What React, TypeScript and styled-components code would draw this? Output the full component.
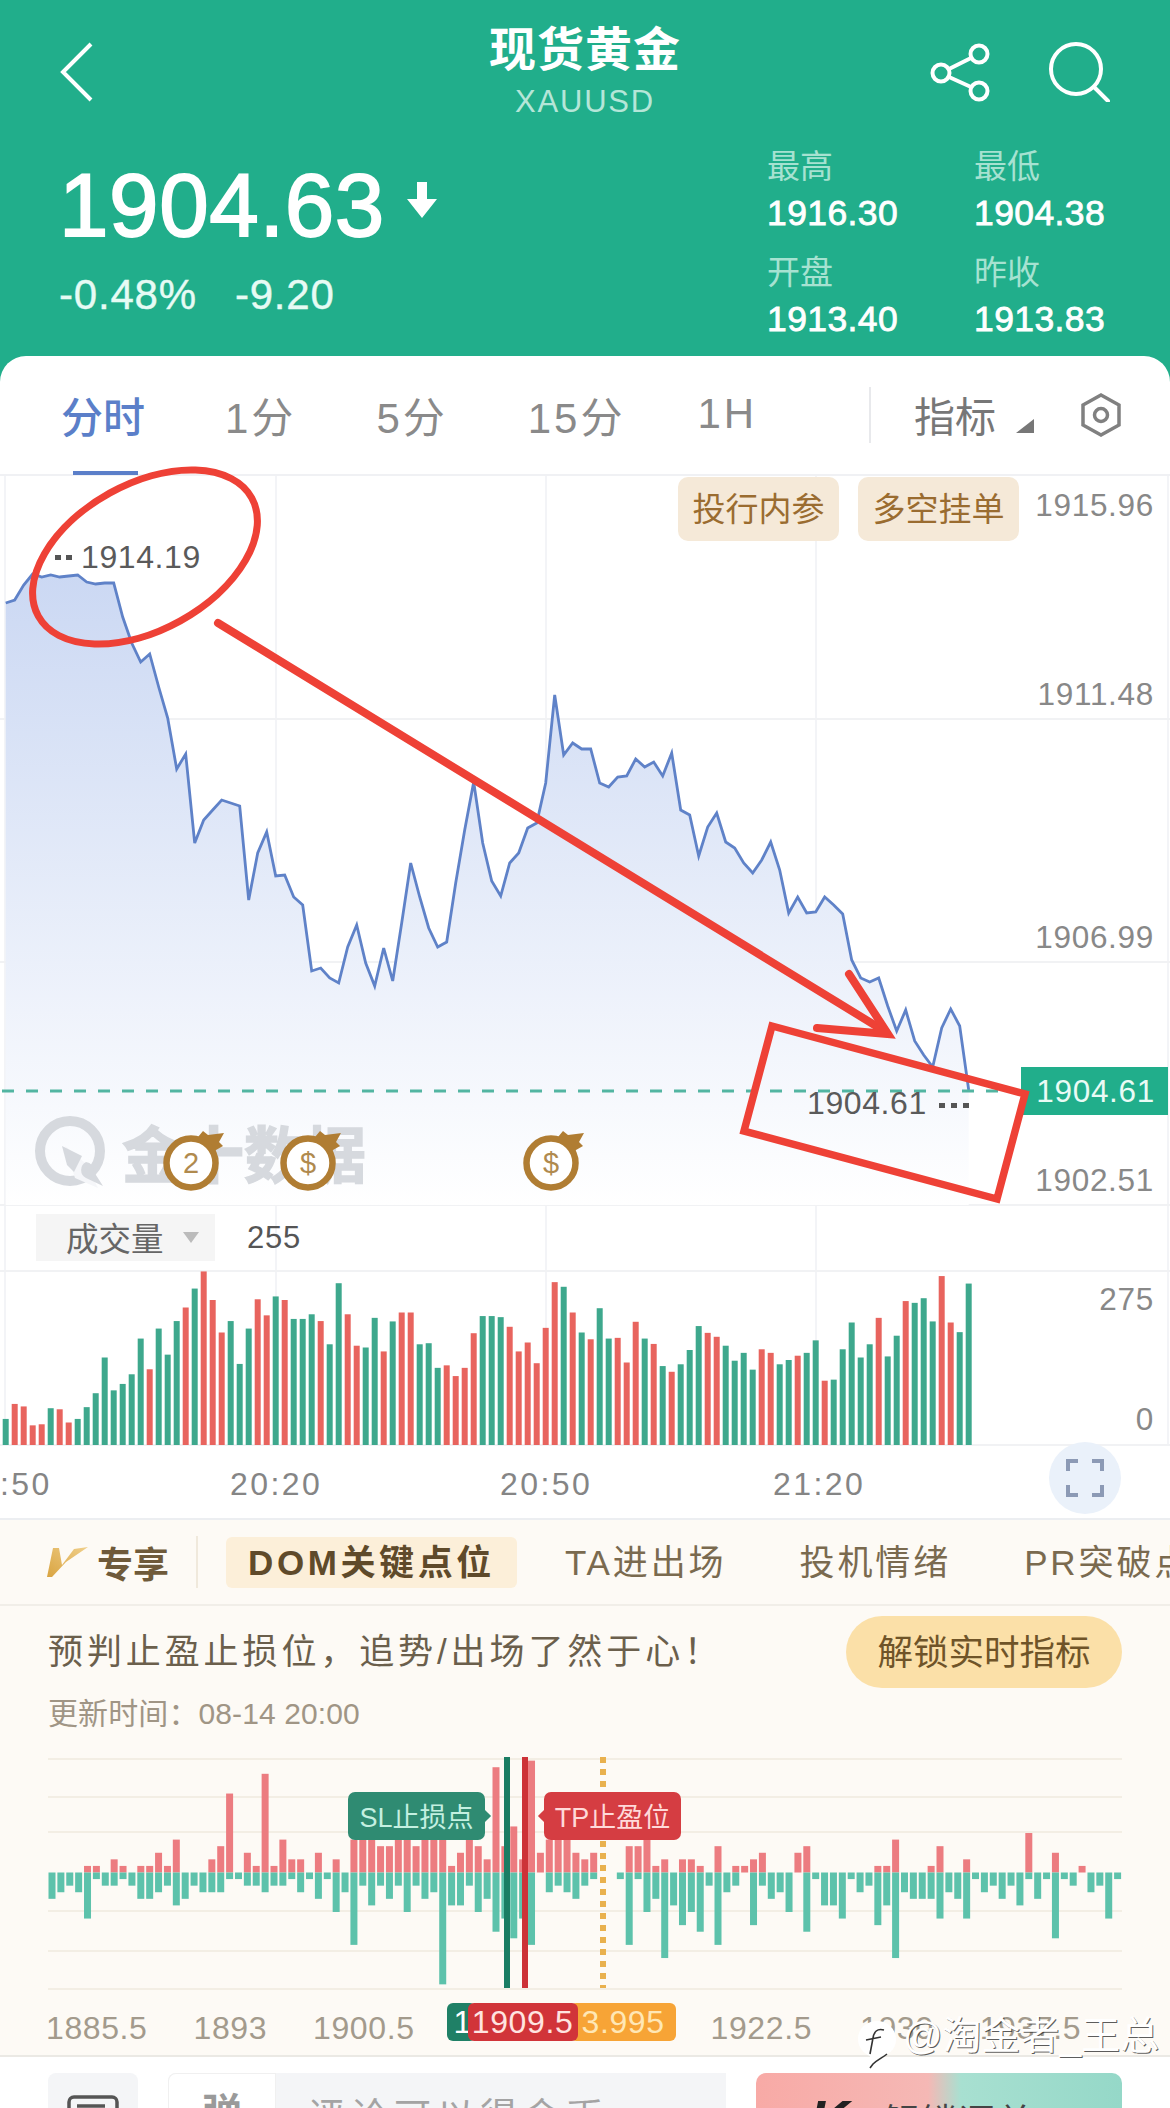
import React from 'react';
import styled, { createGlobalStyle } from 'styled-components';

const GlobalStyle = createGlobalStyle`
  html, body {
    margin: 0;
    padding: 0;
    background: #fff;
    font-family: "Liberation Sans", "Noto Sans CJK SC", sans-serif;
  }
`;

// chart data, read off the picture in page pixels
const priceLine = [
  603, 600, 585, 574, 577, 575, 577, 576, 575, 582, 584, 583, 583, 617, 643, 662, 654, 687, 718, 769,
  754, 843, 820, 810, 800, 803, 806, 900, 853, 832, 876, 875, 897, 905, 971, 968, 978, 983, 947, 925,
  963, 986, 948, 981, 923, 863, 897, 928, 947, 942, 883, 830, 782, 843, 881, 896, 863, 853, 828, 823,
  783, 695, 755, 743, 749, 749, 783, 787, 777, 776, 759, 767, 762, 776, 753, 810, 815, 856, 827, 813,
  842, 848, 863, 873, 860, 842, 870, 913, 897, 913, 912, 897, 905, 914, 960, 978, 982, 978, 1006, 1031,
  1010, 1041, 1055, 1067, 1028, 1009, 1026, 1090,
];

// volume bar tops as read from the crop, g = green, r = red
const volumeBars =
  'g1285 r1243 r1250 r1303 r1300 g1255 r1258 r1295 g1285 g1252 g1213 g1113 g1205 g1187 g1160 g1060 r1146 g1032 g1105 g1011 ' +
  'r973 g920 r872 r952 r1043 g1011 g1131 g1032 r950 r995 g942 r952 g1005 g1005 g992 r1011 g1076 g905 r992 r1080 ' +
  'g1085 g1002 r1096 g1012 r987 r987 g1076 g1073 g1142 r1135 r1165 r1142 r1045 g997 g997 g1000 r1027 r1096 r1071 r1129 ' +
  'r1030 r902 g915 r987 g1043 r1062 g975 g1060 r1058 r1127 r1013 g1060 r1075 g1137 r1153 g1132 g1092 g1025 r1044 r1055 ' +
  'g1080 g1122 g1100 g1147 r1090 r1100 g1132 g1120 r1108 g1100 g1065 r1178 g1175 g1090 g1015 g1113 g1076 r1002 g1110 g1052 ' +
  'r955 g960 g947 g1012 r885 r1015 g1042 g906';

const domRed = [
  0, 0, 0, 0, 1, 1, 0, 2, 1, 0, 1, 1, 3, 1, 5, 0, 0, 0, 2, 4, 12, 0, 3, 1, 15, 1, 5, 2, 2, 0, 3, 0, 2, 0, 5, 5, 5, 4, 4, 5,
  5, 4, 5, 5, 5, 1, 3, 5, 4, 2, 16, 4, 7, 2, 17, 3, 5, 5, 5, 3, 2, 3, 0, 0, 0, 4, 4, 6, 1, 2, 0, 2, 2, 1, 0, 4, 0, 1, 1, 2,
  3, 0, 0, 0, 3, 4, 0, 0, 0, 0, 0, 0, 0, 1, 1, 5, 0, 0, 0, 1, 4, 0, 0, 2, 0, 0, 0, 0, 0, 0, 6, 0, 0, 3, 0, 0, 1, 0, 0, 0, 0,
];
const domGreen = [
  4, 3, 2, 3, 7, 1, 2, 2, 1, 2, 4, 4, 3, 2, 5, 4, 2, 3, 3, 3, 1, 1, 2, 2, 3, 2, 2, 1, 3, 1, 4, 1, 6, 3, 11, 2, 5, 2, 4, 2,
  6, 2, 4, 3, 17, 5, 5, 2, 6, 4, 9, 7, 10, 7, 11, 0, 3, 2, 3, 4, 2, 1, 0, 0, 1, 11, 1, 6, 4, 13, 5, 8, 6, 9, 2, 11, 3, 2, 0, 8,
  2, 4, 3, 6, 0, 9, 1, 5, 5, 7, 1, 3, 2, 8, 5, 13, 3, 4, 4, 4, 7, 3, 4, 7, 1, 3, 2, 4, 2, 5, 1, 4, 1, 10, 1, 2, 0, 3, 2, 7, 1,
];

const Page = styled.div`
  position: relative;
  width: 1170px;
  height: 2108px;
  overflow: hidden;
  display: flex;
  flex-direction: column;
  background: #fff;
`;

const Header = styled.header`
  height: 384px;
  flex-shrink: 0;
  background: #21ae8b;
  color: #fff;
`;

const TopBar = styled.div`
  display: grid;
  grid-template-columns: 1fr auto 1fr;
  height: 125px;
  padding: 0 60px;
  box-sizing: border-box;
`;

const BackIcon = styled.svg`
  width: 34px;
  height: 60px;
  margin-top: 42px;
`;

const TitleBlock = styled.div`
  display: flex;
  flex-direction: column;
  align-items: center;
  padding-top: 22px;
`;

const Title = styled.div`
  font-size: 47px;
  line-height: 56px;
  font-weight: 700;
  letter-spacing: 1px;
`;

const Symbol = styled.div`
  margin-top: 4px;
  font-size: 31px;
  line-height: 40px;
  letter-spacing: 1.8px;
  color: #b5e6d8;
`;

const TopIcons = styled.div`
  display: flex;
  justify-content: flex-end;
  gap: 58px;
  padding-top: 42px;
`;

const QuoteRow = styled.div`
  display: flex;
  justify-content: space-between;
  padding: 0 66px 0 59px;
`;

const PriceBlock = styled.div`
  padding-top: 35px;
`;

const PriceLine = styled.div`
  display: flex;
  align-items: flex-start;
`;

const Price = styled.div`
  font-size: 89px;
  line-height: 90px;
  letter-spacing: 0.6px;
  -webkit-text-stroke: 1.8px #fff;
`;

const DownArrow = styled.svg`
  width: 30px;
  height: 36px;
  margin: 22px 0 0 22px;
`;

const ChangeLine = styled.div`
  display: flex;
  gap: 38px;
  margin-top: 20px;
  font-size: 42px;
  line-height: 50px;
  letter-spacing: 0.8px;
  color: #e6fbf4;
  -webkit-text-stroke: 0.4px #e6fbf4;
`;

const StatsGrid = styled.div`
  display: grid;
  grid-template-columns: 207px 130px;
  row-gap: 20px;
  padding-top: 22px;
  align-self: flex-start;
`;

const Stat = styled.div`
  display: flex;
  flex-direction: column;
  gap: 6px;
`;

const StatLabel = styled.div`
  font-size: 33px;
  line-height: 40px;
  color: #a6e2d1;
`;

const StatValue = styled.div`
  font-size: 35.5px;
  line-height: 40px;
  letter-spacing: 0.4px;
  -webkit-text-stroke: 0.8px #fff;
`;

const ChartPanel = styled.section`
  position: relative;
  margin-top: -28px;
  height: 1164px;
  flex-shrink: 0;
  background: #fff;
  border-radius: 26px 26px 0 0;
  box-sizing: border-box;
  border-bottom: 2px solid #eceef1;
`;

const PeriodBar = styled.nav`
  display: flex;
  align-items: center;
  height: 120px;
  padding: 0 48px 0 61px;
  box-sizing: border-box;
  border-bottom: 2px solid #f0f1f4;
`;

const PeriodList = styled.div`
  display: flex;
  gap: 80px;
  align-self: stretch;

  & > :last-child {
    margin-left: -8px;
  }
`;

const PeriodTab = styled.div<{ $active?: boolean }>`
  position: relative;
  display: flex;
  align-items: center;
  padding-bottom: 2px;
  box-sizing: border-box;
  font-size: 42px;
  letter-spacing: ${(p) => (p.$active ? '0' : '3px')};
  font-weight: ${(p) => (p.$active ? 500 : 400)};
  color: ${(p) => (p.$active ? '#5b7fc9' : '#8a8a8a')};

  ${(p) =>
    p.$active &&
    `&::after {
      content: '';
      position: absolute;
      left: 12px;
      right: 7px;
      bottom: -1px;
      height: 4px;
      background: #5b7fc9;
    }`}
`;

const ToolGroup = styled.div`
  display: flex;
  align-items: center;
  margin-left: auto;
`;

const ToolDivider = styled.div`
  width: 2px;
  height: 56px;
  margin-right: 43px;
  background: #e8e9ec;
`;

const ToolLabel = styled.div`
  padding-bottom: 2px;
  font-size: 41px;
  color: #777;
`;

const CornerTriangle = styled.svg`
  width: 18px;
  height: 14px;
  margin: 22px 0 0 20px;
`;

const SettingsIcon = styled.svg`
  width: 42px;
  height: 44px;
  margin-left: 46px;
`;

const ChartArea = styled.div`
  position: relative;
  height: 1042px;
`;

const ChartSvg = styled.svg`
  position: absolute;
  left: 0;
  top: 0;
  width: 1170px;
  height: 1042px;
  overflow: visible;
`;

const AxisText = styled.text`
  font-size: 31.5px;
  letter-spacing: 0.7px;
  fill: #888;
  text-anchor: end;
`;

const TimeText = styled.text`
  font-size: 32px;
  letter-spacing: 2.4px;
  fill: #858585;
`;

const SpotText = styled.text`
  font-size: 32px;
  letter-spacing: 0.6px;
  fill: #5a5a5a;
`;

const TagText = styled.text`
  font-size: 31.5px;
  letter-spacing: 0.7px;
  fill: #e9fbf5;
  text-anchor: end;
`;

const WatermarkText = styled.text`
  font-size: 61px;
  font-weight: 700;
  fill: #d6d9de;
  stroke: #d6d9de;
  stroke-width: 1.5px;
`;

const MarkerText = styled.text`
  font-size: 29px;
  fill: #b08a4e;
  text-anchor: middle;
`;

const ChartActions = styled.div`
  position: absolute;
  top: 1px;
  right: 151px;
  display: flex;
  gap: 19px;
`;

const ActionChip = styled.div`
  display: flex;
  align-items: center;
  justify-content: center;
  width: 161px;
  height: 64px;
  padding-bottom: 4px;
  box-sizing: border-box;
  border-radius: 10px;
  background: #f5e9d8;
  color: #9a6c30;
  font-size: 33px;
`;

const VolumeSelect = styled.div`
  position: absolute;
  left: 36px;
  top: 738px;
  display: flex;
  align-items: center;
  width: 179px;
  height: 47px;
  padding: 0 0 3px 30px;
  box-sizing: border-box;
  background: #f5f5f5;
  color: #666;
  font-size: 32.5px;
`;

const VolumeCaret = styled.svg`
  width: 16px;
  height: 11px;
  margin: 3px 0 0 19px;
`;

const VolumeValue = styled.div`
  position: absolute;
  left: 247px;
  top: 738px;
  line-height: 47px;
  font-size: 31px;
  letter-spacing: 0.8px;
  color: #555;
`;

const FullscreenButton = styled.div`
  position: absolute;
  left: 1049px;
  top: 966px;
  display: flex;
  align-items: center;
  justify-content: center;
  width: 72px;
  height: 72px;
  border-radius: 50%;
  background: #eaf1fa;
`;

const DomSection = styled.section`
  flex-shrink: 0;
  height: 537px;
  background: #fdfaf5;
  border-bottom: 2px solid #ebe9e4;
  box-sizing: border-box;
`;

const DomTabs = styled.div`
  display: flex;
  align-items: center;
  height: 86px;
  padding-left: 47px;
  box-sizing: border-box;
  border-bottom: 2px solid #f1eee8;
  overflow: hidden;
  white-space: nowrap;
`;

const Exclusive = styled.div`
  display: flex;
  align-items: center;
  gap: 9px;
  font-size: 36px;
  font-weight: 700;
  color: #6f5a3a;
`;

const DomDivider = styled.div`
  flex-shrink: 0;
  width: 2px;
  height: 52px;
  margin: 0 28px 0 27px;
  background: #f0e9dc;
`;

const DomTabList = styled.div`
  display: flex;
  gap: 29px;
`;

const DomTab = styled.div<{ $active?: boolean }>`
  height: 51px;
  line-height: 51px;
  padding: 0 22px;
  margin-right: ${(p) => (p.$active ? '-3px' : '0')};
  flex-shrink: 0;
  font-size: 35px;
  letter-spacing: ${(p) => (p.$active ? '3.6px' : '2.9px')};
  font-weight: ${(p) => (p.$active ? 700 : 400)};
  color: ${(p) => (p.$active ? '#5f4a2a' : '#7a6a4f')};
  background: ${(p) => (p.$active ? '#fcefd9' : 'transparent')};
  border-radius: 6px;
`;

const DomIntro = styled.div`
  display: flex;
  justify-content: space-between;
  align-items: center;
  padding: 10px 48px 0 48px;
`;

const DomDesc = styled.div`
  margin-top: -8px;
  font-size: 35px;
  letter-spacing: 3.9px;
  color: #6b5f4c;
  white-space: nowrap;
`;

const UnlockButton = styled.div`
  display: flex;
  align-items: center;
  justify-content: center;
  width: 276px;
  height: 72px;
  padding-bottom: 5px;
  box-sizing: border-box;
  border-radius: 36px;
  background: #fbe0a8;
  color: #6f5428;
  font-size: 35.5px;
`;

const UpdateTime = styled.div`
  margin: 6px 0 0 48px;
  font-size: 30px;
  line-height: 40px;
  letter-spacing: 0.1px;
  color: #a09585;
`;

const DomChart = styled.div`
  position: relative;
  height: 245px;
  margin: 16px 48px 0;
`;

const DomSvg = styled.svg`
  display: block;
  width: 1074px;
  height: 245px;
`;

const LevelTip = styled.div<{ $side: 'sl' | 'tp' }>`
  position: absolute;
  top: 42px;
  left: ${(p) => (p.$side === 'sl' ? '300px' : '496px')};
  display: flex;
  align-items: center;
  justify-content: center;
  width: 137px;
  height: 48px;
  padding-bottom: 1px;
  box-sizing: border-box;
  border-radius: 7px;
  font-size: 27px;
  white-space: nowrap;
  background: ${(p) => (p.$side === 'sl' ? '#2f8b72' : '#d53d42')};
  color: ${(p) => (p.$side === 'sl' ? '#c4f0e1' : '#ffd9d9')};

  &::after {
    content: '';
    position: absolute;
    top: 19px;
    width: 10px;
    height: 10px;
    transform: rotate(45deg);
    background: inherit;
    ${(p) => (p.$side === 'sl' ? 'right: -4px;' : 'left: -4px;')}
  }
`;

const DomAxis = styled.div`
  display: flex;
  align-items: center;
  height: 38px;
  margin: 8px 0 0 46px;
  font-size: 32px;
  letter-spacing: 0.6px;
  color: #a39a8c;
  white-space: nowrap;
`;

// the tick labels sit a little lower than the badges between them
const AxisTick = styled.span<{ $gap: number }>`
  margin-right: ${(p) => p.$gap}px;
  padding-top: 13px;
`;

const LevelBadges = styled.div`
  display: flex;
  height: 38px;
  margin-right: 35px;
  line-height: 38px;
`;

const LevelBadge = styled.div<{ $kind: 'sl' | 'mid' | 'tp' }>`
  position: relative;
  z-index: ${(p) => (p.$kind === 'mid' ? 1 : 0)};
  border-radius: 6px;
  ${(p) =>
    p.$kind === 'sl' &&
    `width: 29px; padding-left: 7px; box-sizing: border-box; background: #1f8066; color: #fff; overflow: hidden;`}
  ${(p) =>
    p.$kind === 'mid' &&
    `width: 110px; margin-left: -8px; text-align: center; background: #d13439; color: #ffe4e0;`}
  ${(p) =>
    p.$kind === 'tp' &&
    `width: 106px; margin-left: -8px; padding-left: 12px; box-sizing: border-box; background: #f7a436; color: #ffe7b5;`}
`;

const Footer = styled.footer`
  display: flex;
  flex: 1;
  gap: 30px;
  padding: 16px 48px 0;
  overflow: hidden;
`;

const NoteButton = styled.div`
  display: flex;
  justify-content: center;
  width: 90px;
  height: 70px;
  padding-top: 22px;
  box-sizing: border-box;
  flex-shrink: 0;
  background: #f4f5f7;
  border-radius: 8px 8px 0 0;
`;

const NoteIcon = styled.svg`
  width: 52px;
  height: 40px;
`;

const CommentBox = styled.div`
  display: flex;
  width: 558px;
  height: 70px;
  flex-shrink: 0;
  background: #f4f5f7;
  border-radius: 8px 0 0 0;
`;

const DanmuToggle = styled.div`
  width: 108px;
  padding-top: 15px;
  box-sizing: border-box;
  flex-shrink: 0;
  text-align: center;
  background: #fff;
  border: 1px solid #f0f0f0;
  border-bottom: 0;
  border-radius: 8px 0 0 0;
  font-size: 40px;
  line-height: 48px;
  font-weight: 700;
  color: #9a9a9a;
`;

const CommentHint = styled.div`
  padding: 21px 0 0 32px;
  font-size: 37px;
  line-height: 48px;
  letter-spacing: 6px;
  color: #a4a4a4;
  white-space: nowrap;
`;

const KlineButton = styled.div`
  display: flex;
  width: 366px;
  height: 70px;
  flex-shrink: 0;
  padding: 22px 0 0 54px;
  box-sizing: border-box;
  gap: 34px;
  border-radius: 10px 10px 0 0;
  background: linear-gradient(90deg, #f8aaa6 0%, #f5b8b5 47%, #a8e0d1 56%, #95d8c8 100%);
`;

const KlineMark = styled.span`
  font-size: 54px;
  line-height: 48px;
  font-weight: 700;
  font-style: italic;
  color: #222;
`;

const KlineText = styled.span`
  padding-top: 4px;
  font-size: 36px;
  line-height: 48px;
  letter-spacing: 2px;
  color: #444;
  white-space: nowrap;
`;

const SourceMark = styled.div`
  position: absolute;
  left: 857px;
  top: 2012px;
  display: flex;
  align-items: flex-start;
  gap: 6px;
  font-size: 39px;
  line-height: 48px;
  color: #fff;
  text-shadow: 1px 1px 0 rgba(40, 40, 40, 0.75);
  white-space: nowrap;
`;

const SourceLogo = styled.svg`
  width: 40px;
  height: 54px;
  flex-shrink: 0;
  margin-top: 6px;
`;

const BombMarker: React.FC<{ x: number; label: string }> = ({ x, label }) => (
  <g transform={`translate(${x} 1163)`}>
    <path d="M7 -26 L12 -32 L17 -28 L33 -30 L28 -21 L32 -17 L25 -13 L22 -9 Z" fill="#b07d33" />
    <circle r="24.5" fill="#fff" stroke="#b07d33" strokeWidth="6.5" />
    <MarkerText y="10">{label}</MarkerText>
  </g>
);

const linePoints = priceLine.map((y, i) => `${(5.7 + i * 9).toFixed(1)},${y}`).join(' ');
const lastX = 5.7 + (priceLine.length - 1) * 9;

const MainChart: React.FC = () => (
  <ChartSvg viewBox="0 476 1170 1042">
    <defs>
      <linearGradient id="areaFill" gradientUnits="userSpaceOnUse" x1="0" y1="574" x2="0" y2="1205">
        <stop offset="0" stopColor="#cbd8f3" />
        <stop offset="1" stopColor="#ffffff" />
      </linearGradient>
    </defs>

    {[5, 276, 546, 816, 1168].map((x) => (
      <line key={x} x1={x} x2={x} y1="476" y2="1445" stroke="#f3f4f7" strokeWidth="2" />
    ))}
    {[719, 962, 1205, 1271, 1445].map((y) => (
      <line key={y} x1="0" x2="1170" y1={y} y2={y} stroke="#f1f2f4" strokeWidth="2" />
    ))}

    <polygon points={`5.7,1205 ${linePoints} ${lastX},1205`} fill="url(#areaFill)" />

    <WatermarkText x="122" y="1178">金十数据</WatermarkText>
    <circle cx="70" cy="1151" r="30" fill="none" stroke="#d6d9de" strokeWidth="10" />
    <path d="M65 1146 L85 1163 L98 1188 L75 1178 Z" fill="#f5f6f9" />
    <path d="M62 1146 L82 1156 L74 1172 L67 1165 Z" fill="#d6d9de" />
    <path d="M86 1162 a9 9 0 0 1 8 10 L103 1186 L86 1178 a9 9 0 0 1 0 -16 Z" fill="#d6d9de" />

    <polyline points={linePoints} fill="none" stroke="#5f82c8" strokeWidth="2.8" strokeLinejoin="miter" />

    <line x1="2" x2="1020" y1="1091" y2="1091" stroke="#52b5a2" strokeWidth="3" strokeDasharray="12 12" />

    <rect x="1021" y="1067" width="147" height="48" fill="#21ae8b" />
    <TagText x="1155" y="1102">1904.61</TagText>

    <AxisText x="1154" y="516">1915.96</AxisText>
    <AxisText x="1154" y="705">1911.48</AxisText>
    <AxisText x="1154" y="948">1906.99</AxisText>
    <AxisText x="1154" y="1191">1902.51</AxisText>
    <AxisText x="1154" y="1310">275</AxisText>
    <AxisText x="1154" y="1430">0</AxisText>

    <rect x="55" y="555" width="6" height="5" fill="#555" />
    <rect x="66" y="555" width="6" height="5" fill="#555" />
    <SpotText x="81" y="568">1914.19</SpotText>
    <SpotText x="807" y="1114">1904.61</SpotText>
    <rect x="939" y="1103" width="6" height="5" fill="#555" />
    <rect x="951" y="1103" width="6" height="5" fill="#555" />
    <rect x="963" y="1103" width="6" height="5" fill="#555" />

    <BombMarker x={191} label="2" />
    <BombMarker x={308} label="$" />
    <BombMarker x={551} label="$" />

    {volumeBars.split(' ').map((bar, i) => {
      const top = 960 + Number(bar.slice(1)) / 2.8;
      return (
        <rect
          key={i}
          x={2.7 + i * 9}
          y={top}
          width="6"
          height={1445 - top}
          fill={bar[0] === 'g' ? '#3ea88d' : '#e8645e'}
        />
      );
    })}

    <TimeText x="0" y="1495">:50</TimeText>
    <TimeText x="230" y="1495">20:20</TimeText>
    <TimeText x="500" y="1495">20:50</TimeText>
    <TimeText x="773" y="1495">21:20</TimeText>

    <g fill="none" stroke="#ee4136" strokeLinecap="round" strokeLinejoin="miter">
      <ellipse cx="145" cy="557" rx="122" ry="73" strokeWidth="7" transform="rotate(-29 145 557)" />
      <line x1="218" y1="623" x2="886" y2="1032" strokeWidth="8" />
      <path d="M849 974 L888 1034 L817 1028" strokeWidth="8" />
      <polygon points="772,1026 1025,1094 997,1199 744,1131" strokeWidth="7.5" />
    </g>
  </ChartSvg>
);

const DomBars: React.FC = () => {
  const unit = 6.58;
  const base = 122.5;
  return (
    <DomSvg viewBox="0 0 1074 245">
      {[9, 47, 82, 161, 201, 239].map((y) => (
        <line key={y} x1="0" x2="1074" y1={y} y2={y} stroke="#f3eee4" strokeWidth="2" />
      ))}
      {domRed.map((v, i) => (
        <rect key={i} x={0.5 + i * 8.88} y={base - v * unit} width="7" height={v * unit} fill="#ec7c80" />
      ))}
      {domGreen.map((v, i) => (
        <rect key={i} x={0.5 + i * 8.88} y={base} width="7" height={v * unit} fill="#5dc2ab" />
      ))}
      <rect x="456" y="7" width="6" height="231" fill="#1a7d63" />
      <rect x="474" y="7" width="6" height="231" fill="#cd3237" />
      <line x1="555" x2="555" y1="7" y2="238" stroke="#e9b14e" strokeWidth="6" strokeDasharray="6 6" />
    </DomSvg>
  );
};

const App: React.FC = () => {
  return (
    <Page>
      <GlobalStyle />

      <Header>
        <TopBar>
          <BackIcon viewBox="0 0 34 60">
            <path d="M31 2 L3 30 L31 58" fill="none" stroke="#fff" strokeWidth="4" />
          </BackIcon>
          <TitleBlock>
            <Title>现货黄金</Title>
            <Symbol>XAUUSD</Symbol>
          </TitleBlock>
          <TopIcons>
            <svg width="60" height="60" viewBox="0 0 60 60" fill="none" stroke="#fff" strokeWidth="4">
              <circle cx="11" cy="31" r="8.5" />
              <circle cx="49" cy="12" r="8.5" />
              <circle cx="49" cy="49" r="8.5" />
              <path d="M19 27 L41 16 M19 35 L41 45" />
            </svg>
            <svg width="62" height="60" viewBox="0 0 62 60" fill="none" stroke="#fff" strokeWidth="4">
              <circle cx="28" cy="27" r="25" />
              <path d="M46 45 L60 59" strokeLinecap="round" />
            </svg>
          </TopIcons>
        </TopBar>

        <QuoteRow>
          <PriceBlock>
            <PriceLine>
              <Price>1904.63</Price>
              <DownArrow viewBox="0 0 30 36">
                <path d="M10 0 H20 V17 H30 L15 36 L0 17 H10 Z" fill="#fff" />
              </DownArrow>
            </PriceLine>
            <ChangeLine>
              <span>-0.48%</span>
              <span>-9.20</span>
            </ChangeLine>
          </PriceBlock>
          <StatsGrid>
            <Stat>
              <StatLabel>最高</StatLabel>
              <StatValue>1916.30</StatValue>
            </Stat>
            <Stat>
              <StatLabel>最低</StatLabel>
              <StatValue>1904.38</StatValue>
            </Stat>
            <Stat>
              <StatLabel>开盘</StatLabel>
              <StatValue>1913.40</StatValue>
            </Stat>
            <Stat>
              <StatLabel>昨收</StatLabel>
              <StatValue>1913.83</StatValue>
            </Stat>
          </StatsGrid>
        </QuoteRow>
      </Header>

      <ChartPanel>
        <PeriodBar>
          <PeriodList>
            <PeriodTab $active>分时</PeriodTab>
            <PeriodTab>1分</PeriodTab>
            <PeriodTab>5分</PeriodTab>
            <PeriodTab>15分</PeriodTab>
            <PeriodTab>1H</PeriodTab>
          </PeriodList>
          <ToolGroup>
            <ToolDivider />
            <ToolLabel>指标</ToolLabel>
            <CornerTriangle viewBox="0 0 18 14">
              <path d="M18 0 V14 H0 Z" fill="#777" />
            </CornerTriangle>
            <SettingsIcon viewBox="0 0 42 44" fill="none" stroke="#808080" strokeWidth="3.5">
              <path d="M21 2 L39 12 V32 L21 42 L3 32 V12 Z" />
              <circle cx="21" cy="22" r="6.5" />
            </SettingsIcon>
          </ToolGroup>
        </PeriodBar>

        <ChartArea>
          <MainChart />
          <ChartActions>
            <ActionChip>投行内参</ActionChip>
            <ActionChip>多空挂单</ActionChip>
          </ChartActions>
          <VolumeSelect>
            成交量
            <VolumeCaret viewBox="0 0 16 11">
              <path d="M0 0 H16 L8 11 Z" fill="#bbb" />
            </VolumeCaret>
          </VolumeSelect>
          <VolumeValue>255</VolumeValue>
          <FullscreenButton>
            <svg width="38" height="38" viewBox="0 0 38 38" fill="none" stroke="#8c9ab5" strokeWidth="4">
              <path d="M2 12 V2 H12 M26 2 H36 V12 M36 26 V36 H26 M12 36 H2 V26" />
            </svg>
          </FullscreenButton>
        </ChartArea>
      </ChartPanel>

      <DomSection>
        <DomTabs>
          <Exclusive>
            <svg width="41" height="32" viewBox="0 0 41 32">
              <defs>
                <linearGradient id="goldV" x1="0" y1="1" x2="1" y2="0">
                  <stop offset="0" stopColor="#d9a441" />
                  <stop offset="1" stopColor="#f0cf8a" />
                </linearGradient>
              </defs>
              <path d="M6 2 H12 L15 19 L27 3 L41 1 L19 16 L5 31 H0 Z" fill="url(#goldV)" />
            </svg>
            专享
          </Exclusive>
          <DomDivider />
          <DomTabList>
            <DomTab $active>DOM关键点位</DomTab>
            <DomTab>TA进出场</DomTab>
            <DomTab>投机情绪</DomTab>
            <DomTab>PR突破点</DomTab>
          </DomTabList>
        </DomTabs>

        <DomIntro>
          <DomDesc>预判止盈止损位，追势/出场了然于心！</DomDesc>
          <UnlockButton>解锁实时指标</UnlockButton>
        </DomIntro>
        <UpdateTime>更新时间：08-14 20:00</UpdateTime>

        <DomChart>
          <DomBars />
          <LevelTip $side="sl">SL止损点</LevelTip>
          <LevelTip $side="tp">TP止盈位</LevelTip>
        </DomChart>

        <DomAxis>
          <AxisTick $gap={46}>1885.5</AxisTick>
          <AxisTick $gap={46}>1893</AxisTick>
          <AxisTick $gap={32}>1900.5</AxisTick>
          <LevelBadges>
            <LevelBadge $kind="sl">1</LevelBadge>
            <LevelBadge $kind="mid">1909.5</LevelBadge>
            <LevelBadge $kind="tp">3.995</LevelBadge>
          </LevelBadges>
          <AxisTick $gap={48}>1922.5</AxisTick>
          <AxisTick $gap={46}>1930</AxisTick>
          <AxisTick $gap={0}>1937.5</AxisTick>
        </DomAxis>
      </DomSection>

      <Footer>
        <NoteButton>
          <NoteIcon viewBox="0 0 52 40" fill="none" stroke="#555" strokeWidth="3.5">
            <rect x="2" y="2" width="48" height="38" rx="5" />
            <path d="M10 11 H38" />
          </NoteIcon>
        </NoteButton>
        <CommentBox>
          <DanmuToggle>弹</DanmuToggle>
          <CommentHint>评论可以得金币</CommentHint>
        </CommentBox>
        <KlineButton>
          <KlineMark>K</KlineMark>
          <KlineText>解锁逐单K</KlineText>
        </KlineButton>
      </Footer>

      <SourceMark>
        <SourceLogo viewBox="0 0 40 54">
          <path d="M20 3 C32 3 39 12 39 22 C39 32 30 38 22 39 L14 44 L13 38 C6 35 1 29 1 21 C1 11 9 3 20 3 Z" fill="#fff" />
          <path d="M27 12 C20 10 17 14 16 20 L13 36 M9 22 L24 19 M30 36 C25 40 20 42 16 46 L13 50" fill="none" stroke="#333" strokeWidth="1.6" />
        </SourceLogo>
        @淘金者_王总
      </SourceMark>
    </Page>
  );
};

export default App;
